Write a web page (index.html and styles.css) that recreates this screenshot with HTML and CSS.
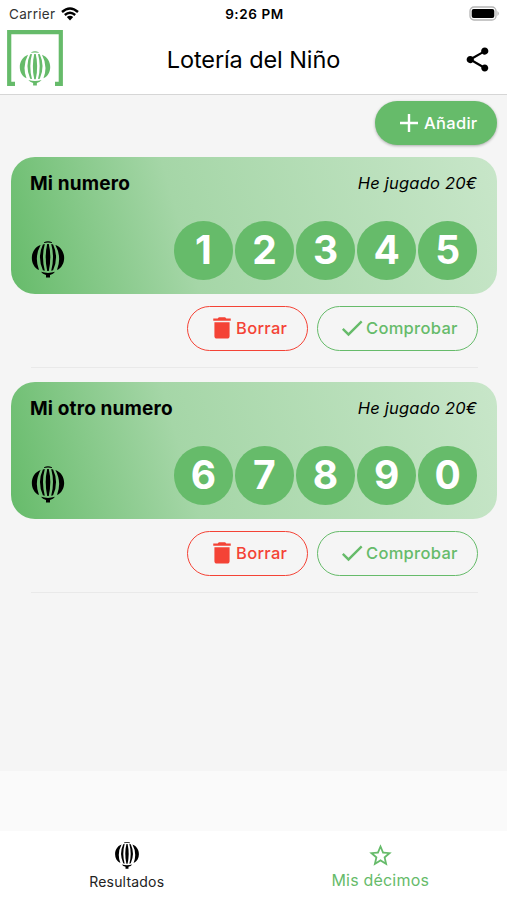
FILE: index.html
```
<!DOCTYPE html>
<html lang="es">
<head>
    <meta charset="UTF-8">
    <meta name="viewport" content="width=device-width, initial-scale=1.0">
    <title>Lotería del Niño</title>
    <link rel="stylesheet" href="styles.css">
</head>
<body>
    <!-- Shared icons -->
    <svg class="icon-defs" width="0" height="0">
        <symbol id="balloon" viewBox="0 0 34 38">
            <path d="M13 2.200Q17 .4 21 2.200V2.900Q17 2 13 2.900Z"/>
            <path d="M16.200 4H17.800Q20.800 17 17.800 31H16.200Q13.200 17 16.200 4Z"/>
            <path d="M13.800 4L11.900 4.400Q6 17 11.900 30.300L13.800 30.800Q10.200 17 13.800 4Z"/>
            <path d="M20.200 4L22.100 4.400Q28 17 22.100 30.300L20.200 30.800Q23.800 17 20.200 4Z"/>
            <path d="M9.600 4.900C-1.800 9-1.800 25.500 8 30Q3 17 9.600 4.900Z"/>
            <path d="M24.400 4.900C35.800 9 35.800 25.500 26 30Q31 17 24.400 4.900Z"/>
            <path d="M10 31.800Q17 34 24 31.800Q22.500 34 19 34.900V37.600H15V34.900Q11.500 34 10 31.800Z"/>
        </symbol>
        <symbol id="trash" viewBox="0 0 24 24">
            <path d="M5.500 19c0 1.100.9 2 2 2h9c1.100 0 2-.9 2-2V7h-13v12zM19.500 3.800h-3.800l-1-1h-5.400l-1 1H4.500v2h15V3.800z"/>
        </symbol>
        <symbol id="check" viewBox="0 0 24 24">
            <path d="M9 16.170L4.830 12l-1.420 1.410L9 19 21 7l-1.410-1.410z"/>
        </symbol>
    </svg>

    <div class="app">
        <div class="status-bar">
            <div class="carrier">
                <span>Carrier</span>
                <svg class="wifi" viewBox="0 0 18 14">
                    <path d="M1 5Q9-2 17 5M3.800 8Q9 3.600 14.200 8" fill="none" stroke="#000" stroke-width="2.400"/>
                    <path d="M5.800 10Q9 7.300 12.200 10L9 13.500Z"/>
                </svg>
            </div>
            <div class="time">9:26 PM</div>
            <div class="battery-wrap">
                <svg class="battery" viewBox="0 0 31 15">
                    <rect x="1" y="1" width="26" height="13" rx="4" fill="#fff" stroke="#b5b5b5" stroke-width="1.300"/>
                    <rect x="2.700" y="2.900" width="22.600" height="9.200" rx="2"/>
                    <path d="M28.500 5Q31 7.500 28.500 10Z" fill="#aaa"/>
                </svg>
            </div>
        </div>

        <header class="app-header">
            <div class="logo">
                <svg class="logo-frame" viewBox="0 0 56 56">
                    <path d="M8 53.800H2.200V2.200H53.800V53.800H48" fill="none" stroke="#66bb6a" stroke-width="4.200"/>
                    <use href="#balloon" x="12" y="20" width="32" height="36"/>
                </svg>
            </div>
            <h1>Lotería del Niño</h1>
            <svg class="share" viewBox="0 0 24 24">
                <path d="M18 16.080c-.760 0-1.440.3-1.960.770L8.910 12.700c.050-.230.090-.460.090-.7s-.040-.470-.090-.7l7.050-4.110c.540.5 1.250.810 2.040.810 1.660 0 3-1.340 3-3s-1.340-3-3-3-3 1.340-3 3c0 .240.040.470.090.7L8.040 9.810C7.500 9.310 6.790 9 6 9c-1.660 0-3 1.340-3 3s1.340 3 3 3c.790 0 1.500-.310 2.040-.810l7.120 4.160c-.050.210-.080.430-.080.650 0 1.610 1.310 2.920 2.920 2.920s2.920-1.310 2.920-2.920-1.310-2.920-2.920-2.920z"/>
            </svg>
        </header>

        <main class="content">
            <div class="toolbar">
                <button class="btn-add">
                    <svg viewBox="0 0 18 18"><path d="M9 0V18M0 9H18" stroke="#fff" stroke-width="2.400"/></svg>
                    Añadir
                </button>
            </div>

            <section class="ticket">
                <div class="ticket-card">
                    <div class="ticket-top">
                        <h2>Mi numero</h2>
                        <span class="played">He jugado 20€</span>
                    </div>
                    <div class="ticket-bottom">
                        <svg class="balloon"><use href="#balloon"/></svg>
                        <div class="numbers">
                            <span>1</span><span>2</span><span>3</span><span>4</span><span>5</span>
                        </div>
                    </div>
                </div>
                <div class="actions">
                    <button class="btn btn-delete"><svg><use href="#trash"/></svg>Borrar</button>
                    <button class="btn btn-check"><svg><use href="#check"/></svg>Comprobar</button>
                </div>
            </section>

            <section class="ticket">
                <div class="ticket-card">
                    <div class="ticket-top">
                        <h2>Mi otro numero</h2>
                        <span class="played">He jugado 20€</span>
                    </div>
                    <div class="ticket-bottom">
                        <svg class="balloon"><use href="#balloon"/></svg>
                        <div class="numbers">
                            <span>6</span><span>7</span><span>8</span><span>9</span><span>0</span>
                        </div>
                    </div>
                </div>
                <div class="actions">
                    <button class="btn btn-delete"><svg><use href="#trash"/></svg>Borrar</button>
                    <button class="btn btn-check"><svg><use href="#check"/></svg>Comprobar</button>
                </div>
            </section>
        </main>

        <div class="ad-space"></div>

        <nav class="tab-bar">
            <div class="tab">
                <svg class="tab-balloon"><use href="#balloon"/></svg>
                <span>Resultados</span>
            </div>
            <div class="tab active">
                <svg class="tab-star" viewBox="0 0 24 24">
                    <path d="M22 9.240l-7.190-.620L12 2 9.190 8.630 2 9.240l5.460 4.730L5.820 21 12 17.270 18.180 21l-1.630-7.030L22 9.240zM12 15.400l-3.760 2.270 1-4.280-3.320-2.880 4.380-.380L12 6.100l1.710 4.040 4.380.380-3.320 2.880 1 4.280L12 15.400z"/>
                </svg>
                <span>Mis décimos</span>
            </div>
        </nav>
    </div>
</body>
</html>
```
FILE: styles.css
```
* {
    box-sizing: border-box;
}
body {
    margin: 0;
    font-family: Inter, 'Liberation Sans', sans-serif;
    color: #000;
    background: #fff;
}
.icon-defs {
    display: block;
}
.app {
    display: flex;
    flex-direction: column;
    height: 900px;
}
h1, h2 {
    margin: 0;
}

/* Status bar */
.status-bar {
    display: grid;
    grid-template-columns: 1fr auto 1fr;
    align-items: center;
    height: 27px;
    padding: 0 7px 0 9px;
    font-size: 13.500px;
}
.carrier {
    display: flex;
    align-items: center;
    gap: 6px;
    color: #333;
    letter-spacing: 0.3px;
}
.wifi {
    width: 18px;
    height: 14px;
}
.time {
    font-weight: 600;
    letter-spacing: 0.6px;
}
.battery-wrap {
    display: flex;
    justify-content: flex-end;
}
.battery {
    width: 31px;
    height: 15px;
}

/* Header */
.app-header {
    display: grid;
    grid-template-columns: 64px 1fr 64px;
    align-items: center;
    height: 68px;
    padding: 0 7px 2px;
    border-bottom: 1px solid #d6d6d6;
}
.logo-frame {
    display: block;
    width: 56px;
    height: 56px;
    margin-top: -3px;
    fill: #66bb6a;
}
.app-header h1 {
    font-size: 23.500px;
    font-weight: 400;
    letter-spacing: -0.1px;
    text-align: center;
}
.share {
    width: 29px;
    height: 29px;
    justify-self: end;
    margin-right: 8px;
}

/* Content */
.content {
    height: 676px;
    padding: 6px 10px 0 11px;
    background: #f5f5f5;
}
.toolbar {
    display: flex;
    justify-content: flex-end;
    margin-bottom: 12px;
}
button {
    font-family: inherit;
    font-size: 16.500px;
    font-weight: 500;
    letter-spacing: 0.3px;
}
.btn-add {
    display: flex;
    align-items: center;
    gap: 6px;
    width: 122px;
    height: 44px;
    padding: 0 0 0 25px;
    border: none;
    border-radius: 22px;
    color: #fff;
    background: #66bb6a;
    box-shadow: 0 1px 3px rgba(0,0,0,0.3);
}
.btn-add svg {
    width: 18px;
    height: 18px;
}
.ticket {
    height: 225px;
}
.ticket-card {
    height: 137px;
    padding: 16px 20px 14px 19px;
    border-radius: 24px;
    background: linear-gradient(74deg, #66bb6a 0%, #a5d6a7 36%, #c8e6c9 100%);
}
.ticket-top {
    display: flex;
    justify-content: space-between;
    height: 48px;
}
.ticket-top h2 {
    font-size: 19px;
    font-weight: 650;
    letter-spacing: 0.15px;
    line-height: 21px;
}
.played {
    font-size: 16.500px;
    font-style: italic;
    letter-spacing: 0.2px;
    line-height: 21px;
}
.ticket-bottom {
    display: flex;
    justify-content: space-between;
}
.balloon {
    width: 34px;
    height: 38px;
    margin: 19px 0 0 1px;
}
.numbers {
    display: flex;
    gap: 2.400px;
}
.numbers span {
    width: 58.700px;
    height: 58.700px;
    border-radius: 50%;
    color: #fff;
    background: #66bb6a;
    font-size: 39px;
    font-weight: 700;
    line-height: 58px;
    text-align: center;
}
.actions {
    display: flex;
    justify-content: flex-end;
    gap: 9px;
    height: 74px;
    margin: 0 19px 0 20px;
    padding-top: 12px;
    border-bottom: 1px solid #e9e9e9;
}
.btn {
    display: flex;
    align-items: center;
    height: 45px;
    padding: 0 0 1px 20px;
    border: 1.500px solid;
    border-radius: 23px;
    background: transparent;
}
.btn svg {
    width: 28px;
    height: 28px;
    fill: currentColor;
}
.btn-delete {
    width: 121px;
    color: #f44336;
}
.btn-check {
    width: 161px;
    color: #66bb6a;
}

.ad-space {
    height: 60px;
    background: #fafafa;
}

/* Tab bar */
.tab-bar {
    display: grid;
    grid-template-columns: 1fr 1fr;
    height: 69px;
}
.tab {
    display: flex;
    flex-direction: column;
    align-items: center;
    color: #222;
    font-size: 14px;
    line-height: 20px;
}
.tab span {
    letter-spacing: 0.2px;
}
.tab-balloon {
    width: 26px;
    height: 28px;
    margin: 10px 0 3px;
}
.tab-star {
    width: 27px;
    height: 27px;
    margin: 11px 0 1px;
    fill: currentColor;
}
.tab.active {
    color: #66bb6a;
    font-size: 16px;
}
```
